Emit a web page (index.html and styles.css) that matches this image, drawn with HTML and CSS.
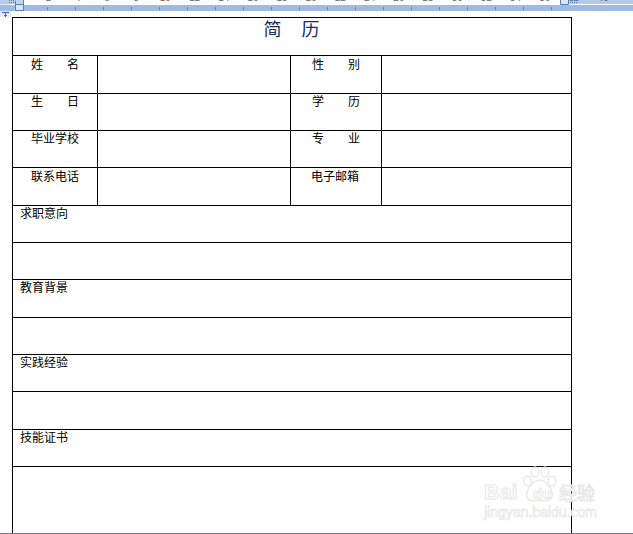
FILE: index.html
```html
<!DOCTYPE html>
<html lang="zh-CN">
<head>
<meta charset="utf-8">
<title>简历</title>
<link rel="stylesheet" href="styles.css">
</head>
<body>
<div class="app">
  <header class="ruler">
    <div class="ruler-nums">
      <div class="nums-inner">
        <span>2</span><span>4</span><span>6</span><span>8</span><span>10</span><span>12</span><span>14</span><span>16</span><span>18</span><span>20</span><span>22</span><span>24</span><span>26</span><span>28</span><span>30</span><span>32</span><span>34</span><span>36</span><span>38</span><span>40</span>
      </div>
    </div>
    <div class="ruler-band">
      <i></i><i></i><i></i><i></i><i></i><i></i><i></i><i></i><i></i><i></i><i></i><i></i><i></i><i></i><i></i><i></i><i></i><i></i><i></i>
    </div>
    <svg class="handle handle-left" width="16" height="11" viewBox="0 0 16 11"><path d="M0 .5H6M0 2.500H6" stroke="#5d7fae" stroke-dasharray="1 1"/><path d="M6.500 .5V10.500H14.500V0" fill="#dbe5f3" stroke="#5d7fae"/><path d="M6.500 4.500H14.500" stroke="#5d7fae"/><path d="M7 0h7v4H7z" fill="#c3d3e9"/></svg>
    <svg class="handle handle-right" width="18" height="5" viewBox="0 0 18 5"><path d="M8 .5H17M8 2.500H17" stroke="#5d7fae" stroke-dasharray="1 1"/><path d="M.5 0V4.500H8.500V0" fill="#dbe5f3" stroke="#5d7fae"/></svg>
    <svg class="tab-mark" width="8" height="6" viewBox="0 0 8 6"><path d="M0 1.500H7M3.500 1V6M2 4.500H5" stroke="#3a68c8" fill="none"/></svg>
  </header>
  <main class="doc">
    <table class="resume">
      <colgroup><col class="c1"><col class="c2"><col class="c3"><col class="c4"></colgroup>
      <tr class="r38"><td colspan="4" class="title">简&#12288;历</td></tr>
      <tr class="r38 low"><td class="label">姓&#12288;&#12288;名</td><td></td><td class="label alt">性&#12288;&#12288;别</td><td></td></tr>
      <tr class="r37"><td class="label">生&#12288;&#12288;日</td><td></td><td class="label alt">学&#12288;&#12288;历</td><td></td></tr>
      <tr class="r37"><td class="label">毕业学校</td><td></td><td class="label alt">专&#12288;&#12288;业</td><td></td></tr>
      <tr class="r38 low"><td class="label">联系电话</td><td></td><td class="label mail">电子邮箱</td><td></td></tr>
      <tr class="r37"><td colspan="4" class="section">求职意向</td></tr>
      <tr class="r37"><td colspan="4"></td></tr>
      <tr class="r38"><td colspan="4" class="section">教育背景</td></tr>
      <tr class="r37"><td colspan="4"></td></tr>
      <tr class="r37"><td colspan="4" class="section">实践经验</td></tr>
      <tr class="r38"><td colspan="4"></td></tr>
      <tr class="r37"><td colspan="4" class="section">技能证书</td></tr>
      <tr class="r-last"><td colspan="4"></td></tr>
    </table>
  </main>
  <footer class="status"></footer>
  <div class="watermark" aria-label="Baidu经验">
    <div class="wm-top">
      <span class="bai">Bai</span>
      <svg class="paw" width="35" height="38" viewBox="0 0 35 38">
        <g fill="#fff" stroke="#e8e8e8" stroke-width="1.300">
          <ellipse cx="5.500" cy="15" rx="3.800" ry="5"/>
          <ellipse cx="13" cy="6" rx="3.800" ry="5"/>
          <ellipse cx="23" cy="6" rx="3.800" ry="5"/>
          <ellipse cx="30" cy="15" rx="3.800" ry="5"/>
          <path d="M17.500 14C24 14 32 25 30 31C28 36 21 35 17.500 34C14 35 7 36 5 31C3 25 11 14 17.500 14Z"/>
        </g>
      </svg>
      <span class="du">du</span>
      <span class="jy">经验</span>
    </div>
    <div class="wm-url">jingyan.baidu.com</div>
  </div>
</div>
</body>
</html>
```

FILE: styles.css
```css
* {
  box-sizing: border-box;
}

html,
body {
  margin: 0;
  height: 100%;
  overflow: hidden;
  background: #fff;
}

.app {
  position: relative;
  display: flex;
  flex-direction: column;
  height: 534px;
  width: 633px;
  overflow: hidden;
  font-family: "Noto Sans CJK SC", "Liberation Sans", sans-serif;
}

.ruler {
  position: relative;
  flex: 0 0 17px;
  height: 17px;
  background: linear-gradient(90deg, #e9e9e9 0, #e9e9e9 11px, #fff 11px);
}

.ruler-nums {
  height: 4px;
  overflow: hidden;
  background: linear-gradient(90deg, #b3cbea 0, #b3cbea 15px, #fdfdfd 15px, #fdfdfd 565px, #b3cbea 565px);
}

.nums-inner {
  display: flex;
  margin-top: -8px;
  padding-left: 34px;
  font: 10px/12px "Liberation Sans", sans-serif;
  color: #6a6a6a;
}

.nums-inner span {
  flex: 0 0 29.200px;
  text-align: center;
}

.ruler-band {
  display: flex;
  gap: 27px;
  height: 6px;
  margin-top: 1px;
  padding: 2px 0 0 47px;
  background: #9dbbe3;
}

.ruler-band i {
  flex: 0 0 1px;
  height: 3px;
  background: #7b8694;
}

.handle {
  position: absolute;
  top: 0;
}

.handle-left {
  left: 9px;
}

.handle-right {
  left: 560px;
}

.tab-mark {
  position: absolute;
  left: 2px;
  top: 11px;
}

.doc {
  flex: 1;
  min-height: 0;
  overflow: hidden;
  padding-left: 12px;
}

.resume {
  width: 560px;
  table-layout: fixed;
  border-collapse: separate;
  border-spacing: 0;
  border-top: 1px solid #000;
  border-left: 1px solid #000;
  color: #000;
  font-size: 12px;
  line-height: 14px;
}

.c1 {
  width: 85px;
}

.c2 {
  width: 193px;
}

.c3 {
  width: 91px;
}

.c4 {
  width: 190px;
}

.resume td {
  padding: 0;
  vertical-align: top;
  border-right: 1px solid #000;
  border-bottom: 1px solid #000;
}

.r38 {
  height: 38px;
}

.r37 {
  height: 37px;
}

.r-last {
  height: 90px;
}

.resume .low td {
  padding-top: 1px;
}

.resume td.title {
  text-align: center;
  font-size: 18px;
  line-height: 20px;
  letter-spacing: 1px;
  color: #1a2a66;
}

.resume td.label {
  padding-left: 18px;
}

.resume td.alt {
  padding-left: 21px;
}

.resume td.mail {
  padding-left: 20px;
}

.resume td.section {
  padding-left: 7px;
}

.status {
  flex: 0 0 1px;
  background: #5b7fb5;
}

.watermark {
  position: absolute;
  left: 484px;
  top: 466px;
  width: 116px;
  color: #fff;
  -webkit-text-stroke: 1px #e8e8e8;
  font-family: "Liberation Sans", sans-serif;
}

.wm-top {
  display: flex;
  align-items: flex-end;
  height: 38px;
  font-size: 21px;
  font-weight: 700;
  line-height: 24px;
}

.bai {
  flex: 0 0 39px;
  letter-spacing: .5px;
}

.paw {
  margin: 0 0 0 -1px;
  flex: none;
}

.du {
  margin-left: -29px;
  width: 29px;
  text-align: center;
  font-size: 15px;
  line-height: 20px;
  -webkit-text-stroke: .6px #e0e0e0;
}

.jy {
  margin-left: 2px;
  font: 18px/24px "Noto Sans CJK SC", sans-serif;
  white-space: nowrap;
}

.wm-url {
  margin-top: 0;
  font-size: 14px;
  line-height: 16px;
  white-space: nowrap;
  -webkit-text-stroke: .6px #e4e4e4;
}
```
